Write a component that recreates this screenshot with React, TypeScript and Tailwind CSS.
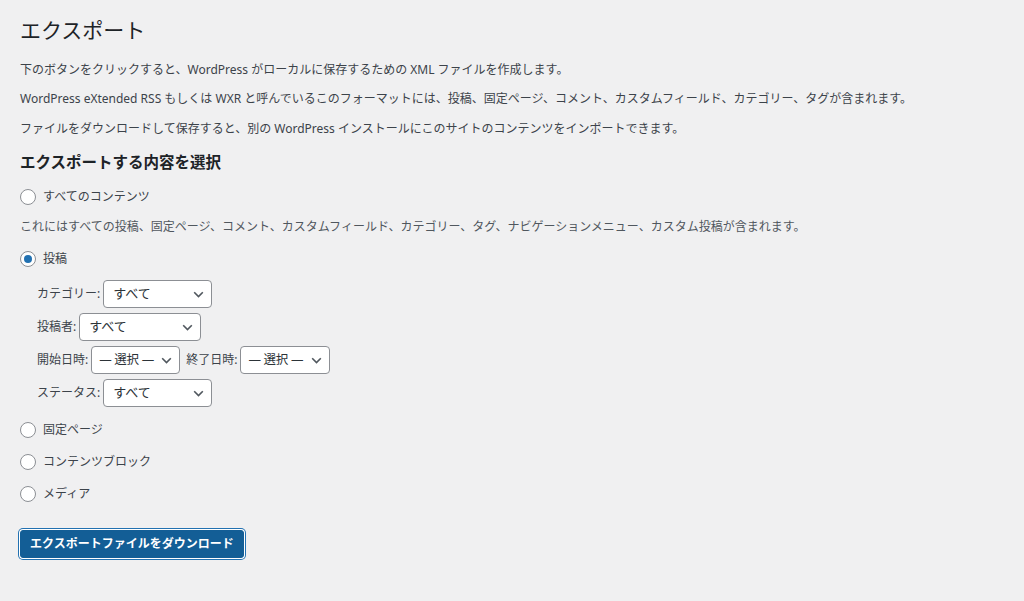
const font = { fontFamily: '"Noto Sans", "Noto Sans CJK JP", sans-serif' };

function Radio({ label, checked = false, className = "" }: { label: string; checked?: boolean; className?: string }) {
  return (
    <div className={`flex h-[20px] items-center ${className}`}>
      <span className="flex h-4 w-4 items-center justify-center rounded-full border border-[#8c8f94] bg-white">
        {checked ? <span className="h-2 w-2 rounded-full bg-[#2271b1]" /> : null}
      </span>
      <span className="ml-[7px] text-[12px] text-[#3c434a]">{label}</span>
    </div>
  );
}

function Select({ value, width, small = false }: { value: string; width: string; small?: boolean }) {
  return (
    <div
      className={`flex h-[28px] items-center justify-between whitespace-nowrap rounded-[4px] border border-[#8c8f94] bg-white pr-[7px] text-[#2c3338] ${
        small ? "pl-[7px] text-[12.5px] tracking-[-0.3px]" : "pl-[9px] text-[13px]"
      } ${width}`}
    >
      <span>{value}</span>
      <svg width="11" height="7" viewBox="0 0 11 7" className="ml-[3px] mt-[1px] shrink-0">
        <path d="M1.2 1.2 L5.5 5.5 L9.8 1.2" fill="none" stroke="#50575e" strokeWidth="1.6" />
      </svg>
    </div>
  );
}

function Field({ label, children, className = "" }: { label: string; children: React.ReactNode; className?: string }) {
  return (
    <div className={`flex h-[28px] items-center ${className}`}>
      <span className="mr-[3px] text-[12px] text-[#3c434a]">{label}</span>
      {children}
    </div>
  );
}

export default function App() {
  return (
    <div className="min-h-[601px] w-full bg-[#f0f0f1] pl-[20px] pt-[15px] text-[#3c434a]" style={font}>
      <h1 className="h-[30px] text-[21px] font-normal leading-[30px] text-[#1d2327]">エクスポート</h1>
      <p className="mt-[15px] h-[20px] text-[12px] leading-[20px]">
        下のボタンをクリックすると、WordPress がローカルに保存するための XML ファイルを作成します。
      </p>
      <p className="mt-[9px] h-[20px] text-[12px] leading-[20px]">
        WordPress eXtended RSS もしくは WXR と呼んでいるこのフォーマットには、投稿、固定ページ、コメント、カスタムフィールド、カテゴリー、タグが含まれます。
      </p>
      <p className="mt-[10px] h-[20px] text-[12px] leading-[20px]">
        ファイルをダウンロードして保存すると、別の WordPress インストールにこのサイトのコンテンツをインポートできます。
      </p>
      <h2 className="mt-[12px] h-[22px] text-[15.5px] font-semibold leading-[22px] text-[#1d2327]">エクスポートする内容を選択</h2>

      <Radio label="すべてのコンテンツ" className="mt-[14px]" />
      <p className="mt-[10px] h-[20px] text-[12px] leading-[20px] text-[#50575e]">
        これにはすべての投稿、固定ページ、コメント、カスタムフィールド、カテゴリー、タグ、ナビゲーションメニュー、カスタム投稿が含まれます。
      </p>
      <Radio label="投稿" checked className="mt-[12px]" />

      <div className="pl-[17px]">
        <Field label="カテゴリー:" className="mt-[11px]">
          <Select value="すべて" width="w-[109px]" />
        </Field>
        <Field label="投稿者:" className="mt-[5px]">
          <Select value="すべて" width="w-[122px]" />
        </Field>
        <div className="mt-[5px] flex h-[28px] items-center">
          <Field label="開始日時:">
            <Select value="— 選択 —" width="w-[89px]" small />
          </Field>
          <Field label="終了日時:" className="ml-[6px]">
            <Select value="— 選択 —" width="w-[90px]" small />
          </Field>
        </div>
        <Field label="ステータス:" className="mt-[5px]">
          <Select value="すべて" width="w-[109px]" />
        </Field>
      </div>

      <Radio label="固定ページ" className="mt-[13px]" />
      <Radio label="コンテンツブロック" className="mt-[12px]" />
      <Radio label="メディア" className="mt-[12px]" />

      <div className="mt-[26px] pb-[40px]">
        <button className="h-[28px] rounded-[3px] border border-[#135e96] bg-[#135e96] px-[9px] text-[12px] font-semibold text-white shadow-[0_0_0_1px_#fff,0_0_0_2px_#2271b1]">
          エクスポートファイルをダウンロード
        </button>
      </div>
    </div>
  );
}
